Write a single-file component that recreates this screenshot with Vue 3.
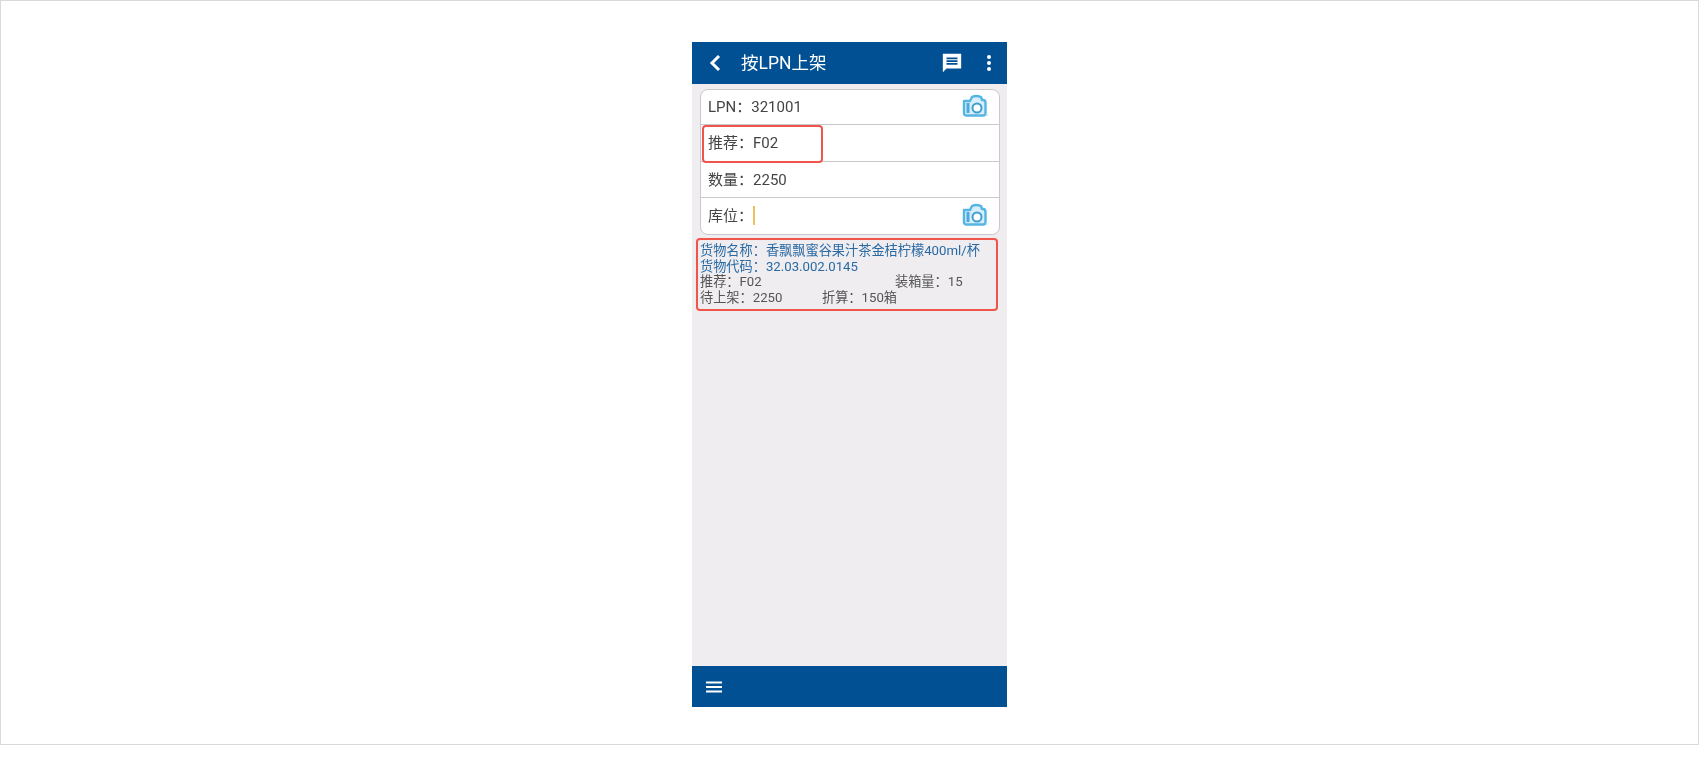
<template>
  <div class="page" lang="zh-CN">
    <div class="phone">
      <header class="topbar">
        <svg class="back" width="14" height="18" viewBox="0 0 14 18">
          <path d="M11 2 L4 9 L11 16" fill="none" stroke="#fff" stroke-width="3" />
        </svg>
        <span class="title">按LPN上架</span>
        <svg class="msg" width="22" height="22" viewBox="0 0 24 24">
          <path fill="#fff" d="M22 2H2v20l4-4h16V2zM6 9h12v2H6V9zm0 3h12v2H6v-2zm0-6h12v2H6V6z" />
        </svg>
        <svg class="more" width="6" height="18" viewBox="0 0 6 18">
          <circle cx="3" cy="3" r="2" fill="#fff" />
          <circle cx="3" cy="9" r="2" fill="#fff" />
          <circle cx="3" cy="15" r="2" fill="#fff" />
        </svg>
      </header>

      <main class="content">
        <div class="form">
          <div v-for="row in rows" :key="row.label" class="row">
            <span class="label">{{ row.label }}：</span>
            <span class="value">{{ row.value }}</span>
            <i v-if="row.cursor" class="cursor"></i>
            <svg v-if="row.scan" class="scan" width="26" height="24" viewBox="0 0 26 24">
              <path d="M2 7 H8 L10 3 Q14 1 19 3 L20 6 H21 Q23.5 6 23.5 9 V19 Q23.5 21.5 21 21.5 H4 Q2 21.5 2 19 Z" fill="#d8eefa" stroke="#55b5e3" stroke-width="2.4" stroke-linejoin="round" />
              <rect x="4.5" y="9" width="3" height="10" fill="#4aa9da" />
              <circle cx="15" cy="14" r="4.5" fill="#fff" stroke="#3f9fd2" stroke-width="2" />
              <path d="M24 20 L25.5 21.5" stroke="#b5dcef" stroke-width="1.5" />
            </svg>
            <div v-if="row.mark" class="mark"></div>
          </div>
        </div>

        <section class="info">
          <div class="blue">货物名称：香飘飘蜜谷果汁茶金桔柠檬400ml/杯</div>
          <div class="blue">货物代码：32.03.002.0145</div>
          <div class="pair">
            <span class="col-a">推荐：F02</span>
            <span>装箱量：15</span>
          </div>
          <div class="pair">
            <span class="col-b">待上架：2250</span>
            <span>折算：150箱</span>
          </div>
        </section>
      </main>

      <footer class="bottombar">
        <svg width="18" height="14" viewBox="0 0 18 14">
          <path d="M1 2.5 H17 M1 7 H17 M1 11.5 H17" stroke="#fff" stroke-width="2" />
        </svg>
      </footer>
    </div>
  </div>
</template>

<script setup>
const rows = [
  { label: 'LPN', value: '321001', scan: true },
  { label: '推荐', value: 'F02', mark: true },
  { label: '数量', value: '2250' },
  { label: '库位', value: '', cursor: true, scan: true },
]
</script>

<style>
html,
body {
  margin: 0;
  background: #fff;
}
</style>

<style scoped>
.page {
  box-sizing: border-box;
  height: 745px;
  width: 1699px;
  border: 1px solid #d9d9d9;
  padding: 41px 0 0 691px;
  font-family: Roboto, "Noto Sans CJK SC", sans-serif;
}

.phone {
  width: 315px;
  height: 665px;
  display: flex;
  flex-direction: column;
  background: #efedf0;
  filter: blur(0.35px);
}

.topbar {
  height: 42px;
  flex: none;
  display: flex;
  align-items: center;
  background: #015093;
  color: #fff;
  padding: 0 15px 0 16px;
}

.back {
  margin-right: 19px;
}

.title {
  font-size: 17.5px;
  flex: 1;
  margin-bottom: 3px;
}

.more {
  margin-left: 23px;
}

.content {
  flex: 1;
  padding: 5px 7px 0 4px;
}

.form {
  margin-left: 4px;
  background: #fff;
  border: 1px solid #c9c9cb;
  border-radius: 8px;
}

.row {
  position: relative;
  box-sizing: border-box;
  height: 36px;
  display: flex;
  align-items: center;
  padding: 0 11px 0 7px;
  font-size: 15px;
  color: #444;
  border-bottom: 1px solid #c9c9cb;
}

.row:first-child {
  height: 35px;
}

.row:nth-child(2) {
  height: 37px;
}

.row:last-child {
  border-bottom: none;
}

.label {
  margin-bottom: 3px;
}

.cursor {
  width: 2px;
  height: 19px;
  margin-bottom: 2px;
  background: #efc15a;
}

.scan {
  margin-left: auto;
  margin-bottom: 2px;
}

.mark {
  position: absolute;
  left: 1px;
  top: 0;
  width: 121px;
  height: 38px;
  box-sizing: border-box;
  border: 2px solid #f0544b;
  border-radius: 4px;
}

.info {
  margin-top: 3px;
  box-sizing: border-box;
  width: 302px;
  height: 73px;
  padding: 3px 2px;
  border: 2px solid #f0544b;
  border-radius: 4px;
  font-size: 13.2px;
  line-height: 15.7px;
  color: #555;
}

.blue {
  color: #2a6aa3;
}

.pair {
  display: flex;
}

.col-a {
  width: 195px;
}

.col-b {
  width: 122px;
}

.bottombar {
  height: 41px;
  flex: none;
  display: flex;
  align-items: center;
  padding-left: 13px;
  background: #015093;
}
</style>
